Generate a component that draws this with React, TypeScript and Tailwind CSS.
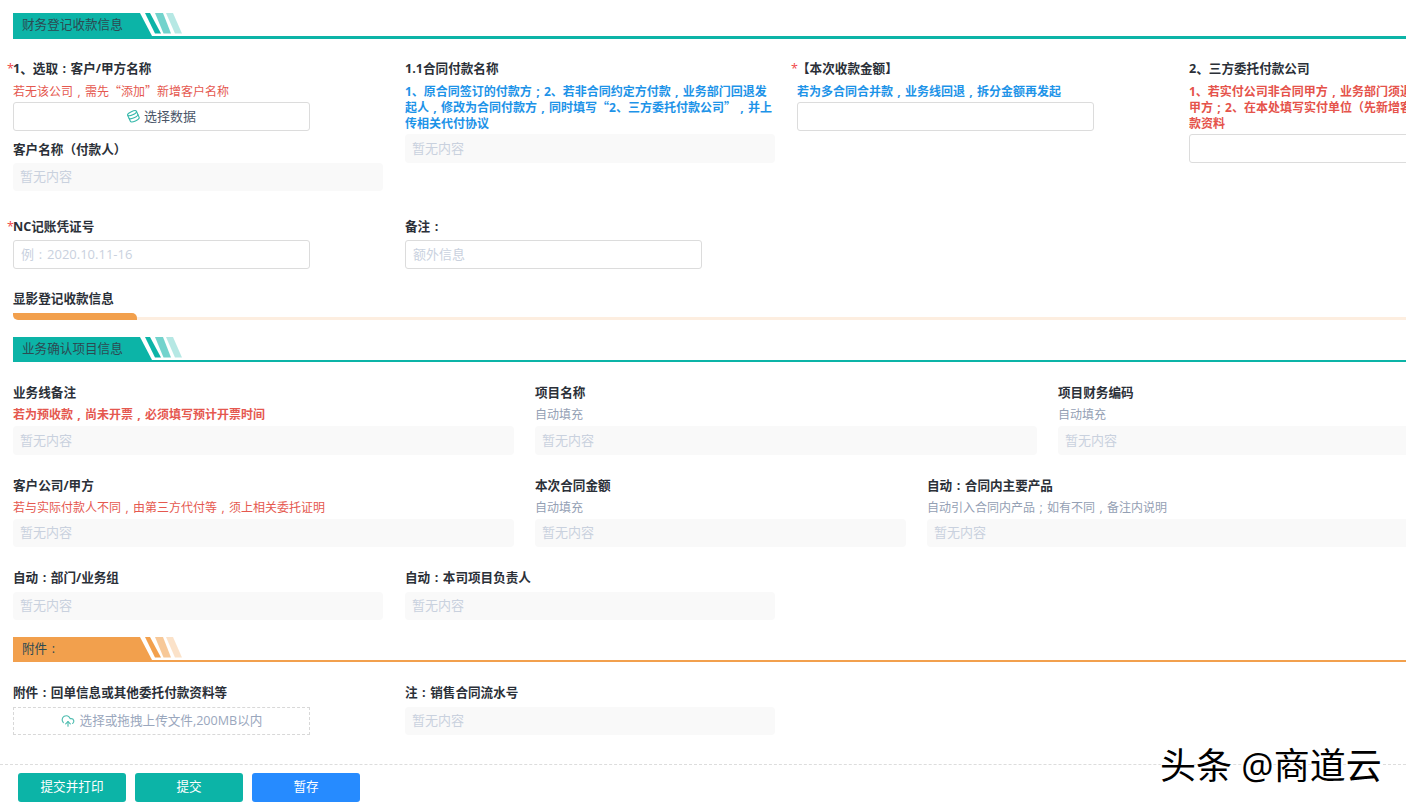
import React from "react";
import { CloudUpload } from "lucide-react";

function fmt(text: string) {
  return text.split(/([，：；“”])/).map((part, i) => {
    if (part === "，") return <span key={i} className="inline-block w-[1em] text-center">,</span>;
    if (part === "：") return <span key={i} className="inline-block w-[1em] text-center">:</span>;
    if (part === "；") return <span key={i} className="inline-block w-[1em] text-center">;</span>;
    if (part === "“" || part === "”") return <span key={i} className="leading-[0] [font-family:'Noto_Sans_CJK_SC']">{part}</span>;
    return part;
  });
}

function Header({ title, orange, thick }: { title: string; orange?: boolean; thick?: boolean }) {
  const fill = orange ? "#f2a04d" : "#0cb4a7";
  return (
    <div className={`flex items-start ${thick ? "border-b-[3px]" : "border-b-2"} ${orange ? "border-[#f2a04d]" : "border-[#0cb4a7]"}`}>
      <div
        className={`h-[23px] w-[139px] pl-[9px] text-[12.6px] leading-[24px] text-[#2c4a52] [clip-path:polygon(0_0,127px_0,139px_100%,0_100%)] ${orange ? "bg-[#f2a04d]" : "bg-[#0cb4a7]"}`}
      >
        {fmt(title)}
      </div>
      <svg width="40" height="21" viewBox="0 0 40 21" className="-ml-[7px] shrink-0">
        <polygon points="0,0 5,0 16,20.5 10,20.5" fill={fill} />
        <polygon points="10,0 18,0 26,20.5 18.5,20.5" fill={fill} opacity="0.58" />
        <polygon points="21,0 28,0 37,20.5 30,20.5" fill={fill} opacity="0.3" />
      </svg>
    </div>
  );
}

function Label({ children, star }: { children: string; star?: boolean }) {
  return (
    <div className="relative h-4 text-[12.6px] leading-4 font-bold text-[#2b3038] whitespace-nowrap">
      {star && <span className="absolute -left-[6px] top-0 font-normal text-[#f04a4a]">*</span>}
      {fmt(children)}
    </div>
  );
}

function Empty({ className = "", tall }: { className?: string; tall?: boolean }) {
  return (
    <div className={`rounded-sm bg-[#f9f9f9] pl-[7px] text-[13px] text-[#c9d1de] ${tall ? "h-[29px] leading-[28px]" : "h-7 leading-[27px]"} ${className}`}>
      暂无内容
    </div>
  );
}

function Field({
  label,
  hint,
  hintClass,
  width,
  tall,
}: {
  label: string;
  hint?: string;
  hintClass?: string;
  width: string;
  tall?: boolean;
}) {
  return (
    <div className={`shrink-0 ${width}`}>
      <Label>{label}</Label>
      {hint ? <div className={`mt-[6px] h-4 text-xs leading-4 ${hintClass}`}>{fmt(hint)}</div> : null}
      <Empty tall={tall} className={hint ? "mt-[3px]" : "mt-[6px]"} />
    </div>
  );
}

const red = "text-[#e5584f]";
const grey = "text-[#94a0b4]";

function TextBox({ placeholder, className = "" }: { placeholder?: string; className?: string }) {
  return (
    <div
      className={`h-[29px] rounded-[3px] border border-[#dcdcdc] bg-white pl-[7px] text-[13px] leading-[26px] text-[#c9d1de] ${className}`}
    >
      {placeholder ? fmt(placeholder) : null}
    </div>
  );
}

export default function App() {
  return (
    <div className="relative h-[808px] w-[1406px] overflow-hidden bg-white pt-[13px] pl-[13px] [font-family:'Open_Sans','Noto_Sans_CJK_SC',sans-serif]">
      <Header title="财务登记收款信息" thick />

      <div className="mt-[22px] flex gap-[22px]">
        <div className="w-[370px] shrink-0">
          <Label star>1、选取：客户/甲方名称</Label>
          <div className={`mt-[7px] h-4 text-xs leading-4 ${red}`}>{fmt("若无该公司，需先“添加”新增客户名称")}</div>
          <button className="mt-[2px] flex h-[29px] w-[297px] items-center justify-center rounded-[3px] border border-[#dcdcdc] bg-white text-[13px] text-[#4a5568]">
            <svg width="13" height="13" viewBox="0 0 13 13" className="mr-[4px]" fill="none">
              <g transform="rotate(-24 6.5 6.5)" stroke="#35b8aa" strokeWidth="1.1">
                <ellipse cx="6.5" cy="2.9" rx="4.8" ry="1.7" />
                <path d="M1.7 2.9 V9.6 C1.7 10.6 3.8 11.3 6.5 11.3 C9.2 11.3 11.3 10.6 11.3 9.6 V2.9" />
                <path d="M1.7 6.2 C1.7 7.2 3.8 7.9 6.5 7.9 C9.2 7.9 11.3 7.2 11.3 6.2" />
              </g>
            </svg>
            选择数据
          </button>
          <div className="mt-[11px]">
            <Label>客户名称（付款人）</Label>
          </div>
          <Empty className="mt-[5px]" />
        </div>

        <div className="w-[370px] shrink-0">
          <Label>1.1合同付款名称</Label>
          <div className="mt-[7px] text-xs leading-4 font-bold text-[#1d93e8]">
            {fmt("1、原合同签订的付款方；2、若非合同约定方付款，业务部门回退发起人，修改为合同付款方，同时填写“2、三方委托付款公司”，并上传相关代付协议")}
          </div>
          <Empty tall className="mt-[2px]" />
        </div>

        <div className="w-[370px] shrink-0">
          <div className="relative h-4 text-[12.6px] leading-4 font-bold text-[#2b3038]">
            <span className="absolute -left-[6px] top-0 font-normal text-[#f04a4a]">*</span>
            【本次收款金额】
          </div>
          <div className="mt-[7px] h-4 text-xs leading-4 font-bold text-[#1d93e8]">{fmt("若为多合同合并款，业务线回退，拆分金额再发起")}</div>
          <TextBox className="mt-[2px] w-[297px]" />
        </div>

        <div className="w-[370px] shrink-0">
          <Label>2、三方委托付款公司</Label>
          <div className="mt-[7px] h-12 overflow-hidden text-xs leading-4 font-bold whitespace-nowrap text-[#e5534b]">
            {fmt("1、若实付公司非合同甲方，业务部门须退回发起人，修改合同")}
            <br />
            {fmt("甲方；2、在本处填写实付单位（先新增客户）")}
            <br />
            款资料
          </div>
          <TextBox className="mt-[2px] w-[297px]" />
        </div>
      </div>

      <div className="mt-[28px] flex gap-[95px]">
        <div className="w-[297px]">
          <Label star>NC记账凭证号</Label>
          <TextBox className="mt-[5px]" placeholder="例：2020.10.11-16" />
        </div>
        <div className="w-[297px]">
          <Label>备注：</Label>
          <TextBox className="mt-[5px]" placeholder="额外信息" />
        </div>
      </div>

      <div className="mt-[22px]">
        <Label>显影登记收款信息</Label>
      </div>
      <div className="mt-[6px] flex h-[7px] items-end bg-white">
        <div className="h-[7px] w-[124px] rounded-tr-[5px] rounded-bl-[5px] bg-[#f2a04d]" />
        <div className="h-[3px] flex-1 bg-[#fdeee0]" />
      </div>

      <div className="mt-[17px]">
        <Header title="业务确认项目信息" />
      </div>

      <div className="mt-[23px] flex gap-[21px]">
        <Field tall label="业务线备注" hint="若为预收款，尚未开票，必须填写预计开票时间" hintClass={`font-bold ${red}`} width="w-[501px]" />
        <Field tall label="项目名称" hint="自动填充" hintClass={grey} width="w-[502px]" />
        <Field tall label="项目财务编码" hint="自动填充" hintClass={grey} width="w-[502px]" />
      </div>

      <div className="mt-[23px] flex gap-[21px]">
        <Field label="客户公司/甲方" hint="若与实际付款人不同，由第三方代付等，须上相关委托证明" hintClass={red} width="w-[501px]" />
        <Field label="本次合同金额" hint="自动填充" hintClass={grey} width="w-[371px]" />
        <Field label="自动：合同内主要产品" hint="自动引入合同内产品；如有不同，备注内说明" hintClass={grey} width="w-[502px]" />
      </div>

      <div className="mt-[23px] flex gap-[22px]">
        <Field label="自动：部门/业务组" width="w-[370px]" />
        <Field label="自动：本司项目负责人" width="w-[370px]" />
      </div>

      <div className="mt-[17px]">
        <Header title="附件：" orange />
      </div>

      <div className="mt-[23px] flex gap-[22px]">
        <div className="w-[370px] shrink-0">
          <Label>附件：回单信息或其他委托付款资料等</Label>
          <div className="mt-[6px] flex h-7 w-[297px] items-center justify-center border border-dashed border-[#d8d8d8] text-[12.6px] text-[#9aa7bd]">
            <CloudUpload size={14} strokeWidth={2} className="mr-[5px] text-[#4fbdb0]" />
            选择或拖拽上传文件,200MB以内
          </div>
        </div>
        <Field label="注：销售合同流水号" width="w-[370px]" />
      </div>

      <div className="mt-[29px] -ml-[13px] flex gap-[9px] border-t border-dashed border-[#dddddd] pt-2 pl-[18px]">
        <button className="h-[29px] w-[108px] rounded-[3px] bg-[#0cb4a7] text-[12.6px] text-white">提交并打印</button>
        <button className="h-[29px] w-[108px] rounded-[3px] bg-[#0cb4a7] text-[12.6px] text-white">提交</button>
        <button className="h-[29px] w-[108px] rounded-[3px] bg-[#268bff] text-[12.6px] text-white">暂存</button>
      </div>

      <div className="absolute left-[1160px] top-[744px] text-[36px] leading-[44px] font-normal whitespace-nowrap text-black [text-shadow:2px_2px_0_#ffffff,-1px_-1px_0_#ffffff]">
        头条 @商道云
      </div>
    </div>
  );
}
